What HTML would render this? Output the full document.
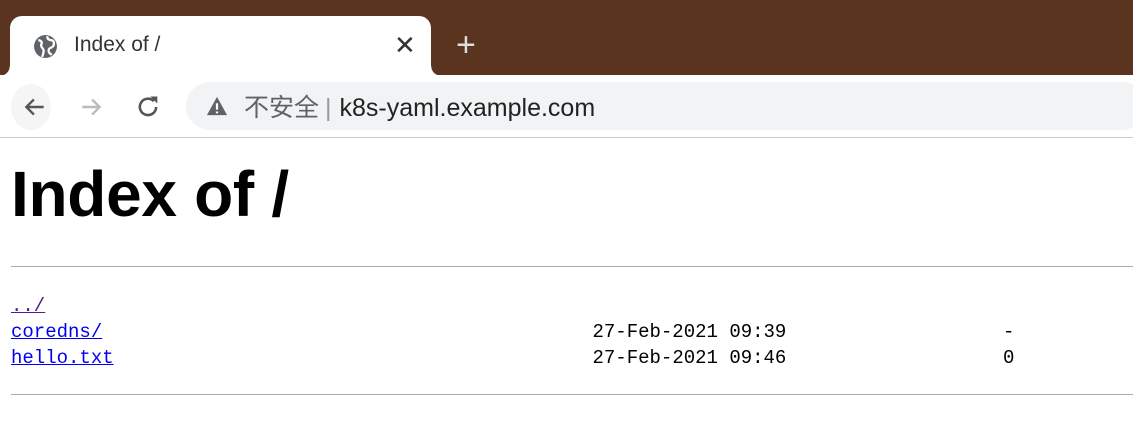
<!DOCTYPE html>
<html><head><meta charset="utf-8"><style>
*{margin:0;padding:0;box-sizing:border-box}
body{width:1133px;height:446px;overflow:hidden;background:#fff;font-family:"Liberation Sans","Noto Sans CJK SC",sans-serif;position:relative}
.top{position:absolute;left:0;top:0;width:1133px;height:75px;background:#5a341e}
.tab{position:absolute;left:10px;top:16px;width:421px;height:60px;background:#fff;border-radius:12px 12px 0 0}
.tab:before,.tab:after{content:"";position:absolute;bottom:0;width:10px;height:10px}
.tab:before{left:-10px;background:radial-gradient(circle at 0 0,transparent 9.5px,#fff 10px)}
.tab:after{right:-10px;background:radial-gradient(circle at 100% 0,transparent 9.5px,#fff 10px)}
.title{position:absolute;left:74px;top:33px;font-size:21px;color:#333}
.x{position:absolute;left:394px;top:30px;font-size:26px;color:#333}
.plus{position:absolute;left:456px;top:26px;font-size:34px;color:#ddd;font-weight:300}
.bar{position:absolute;left:0;top:75px;width:1133px;height:63px;background:#fff;border-bottom:1px solid #ccc}
.omni{position:absolute;left:186px;top:82px;width:960px;height:48px;background:#f1f3f4;border-radius:24px}
.url{position:absolute;left:244px;top:88px;font-size:25px;color:#5f6368}
.url b{font-weight:normal;color:#222}
h1{position:absolute;left:11px;top:157px;font-size:64px;font-weight:bold;color:#000;letter-spacing:-0.3px}
hr{position:absolute;left:11px;width:1122px;border:0;border-top:1px solid #aaa;height:1px}
pre{position:absolute;left:11px;top:293px;font-family:"Liberation Mono",monospace;font-size:19px;line-height:26px;color:#000}
a{color:#0000ee}
a.v{color:#551a8b}
</style></head><body>
<div class="top"></div>
<div class="tab"></div>
<svg style="position:absolute;left:33px;top:34px" width="25" height="25" viewBox="0 0 24 24"><circle cx="12" cy="12" r="11" fill="#5f6368"/><path d="M5 6c3 0 4 2 3 4s1 3 2 5-1 5-1 7M14 2c-1 3 2 4 4 4s3 4 1 6-4 1-4 4 2 3 3 4" stroke="#fff" stroke-width="2.2" fill="none"/></svg>
<div class="title">Index of /</div>
<div class="x">✕</div>
<div class="plus">+</div>
<div class="bar"></div>
<div style="position:absolute;left:11px;top:84px;width:40px;height:46px;background:#f5f5f5;border-radius:50%"></div>
<svg style="position:absolute;left:22px;top:94px" width="26" height="26" viewBox="0 0 24 24"><path d="M20 12H5M11 5l-7 7 7 7" stroke="#555" stroke-width="2.2" fill="none"/></svg>
<svg style="position:absolute;left:78px;top:94px" width="26" height="26" viewBox="0 0 24 24"><path d="M4 12h15M13 5l7 7-7 7" stroke="#bbb" stroke-width="2.2" fill="none"/></svg>
<svg style="position:absolute;left:134px;top:93px" width="28" height="28" viewBox="0 0 24 24"><path d="M19 12a7 7 0 1 1-2-5" stroke="#555" stroke-width="2.2" fill="none"/><path d="M14 3h6v6z" fill="#555"/></svg>
<div class="omni"></div>
<svg style="position:absolute;left:206px;top:95px" width="22" height="22" viewBox="0 0 24 24"><path d="M12 2L23 22H1z" fill="#5f6368"/><path d="M12 9v7M12 18v2" stroke="#fff" stroke-width="2.4"/></svg>
<div class="url">不安全<span style="color:#999;margin:0 8px 0 6px">|</span><b>k8s-yaml.example.com</b></div>
<h1>Index of /</h1>
<hr style="top:266px">
<pre><a class="v" href="#">../</a>
<a href="#">coredns/</a>                                           27-Feb-2021 09:39                   -
<a href="#">hello.txt</a>                                          27-Feb-2021 09:46                   0</pre>
<hr style="top:394px">
</body></html>
